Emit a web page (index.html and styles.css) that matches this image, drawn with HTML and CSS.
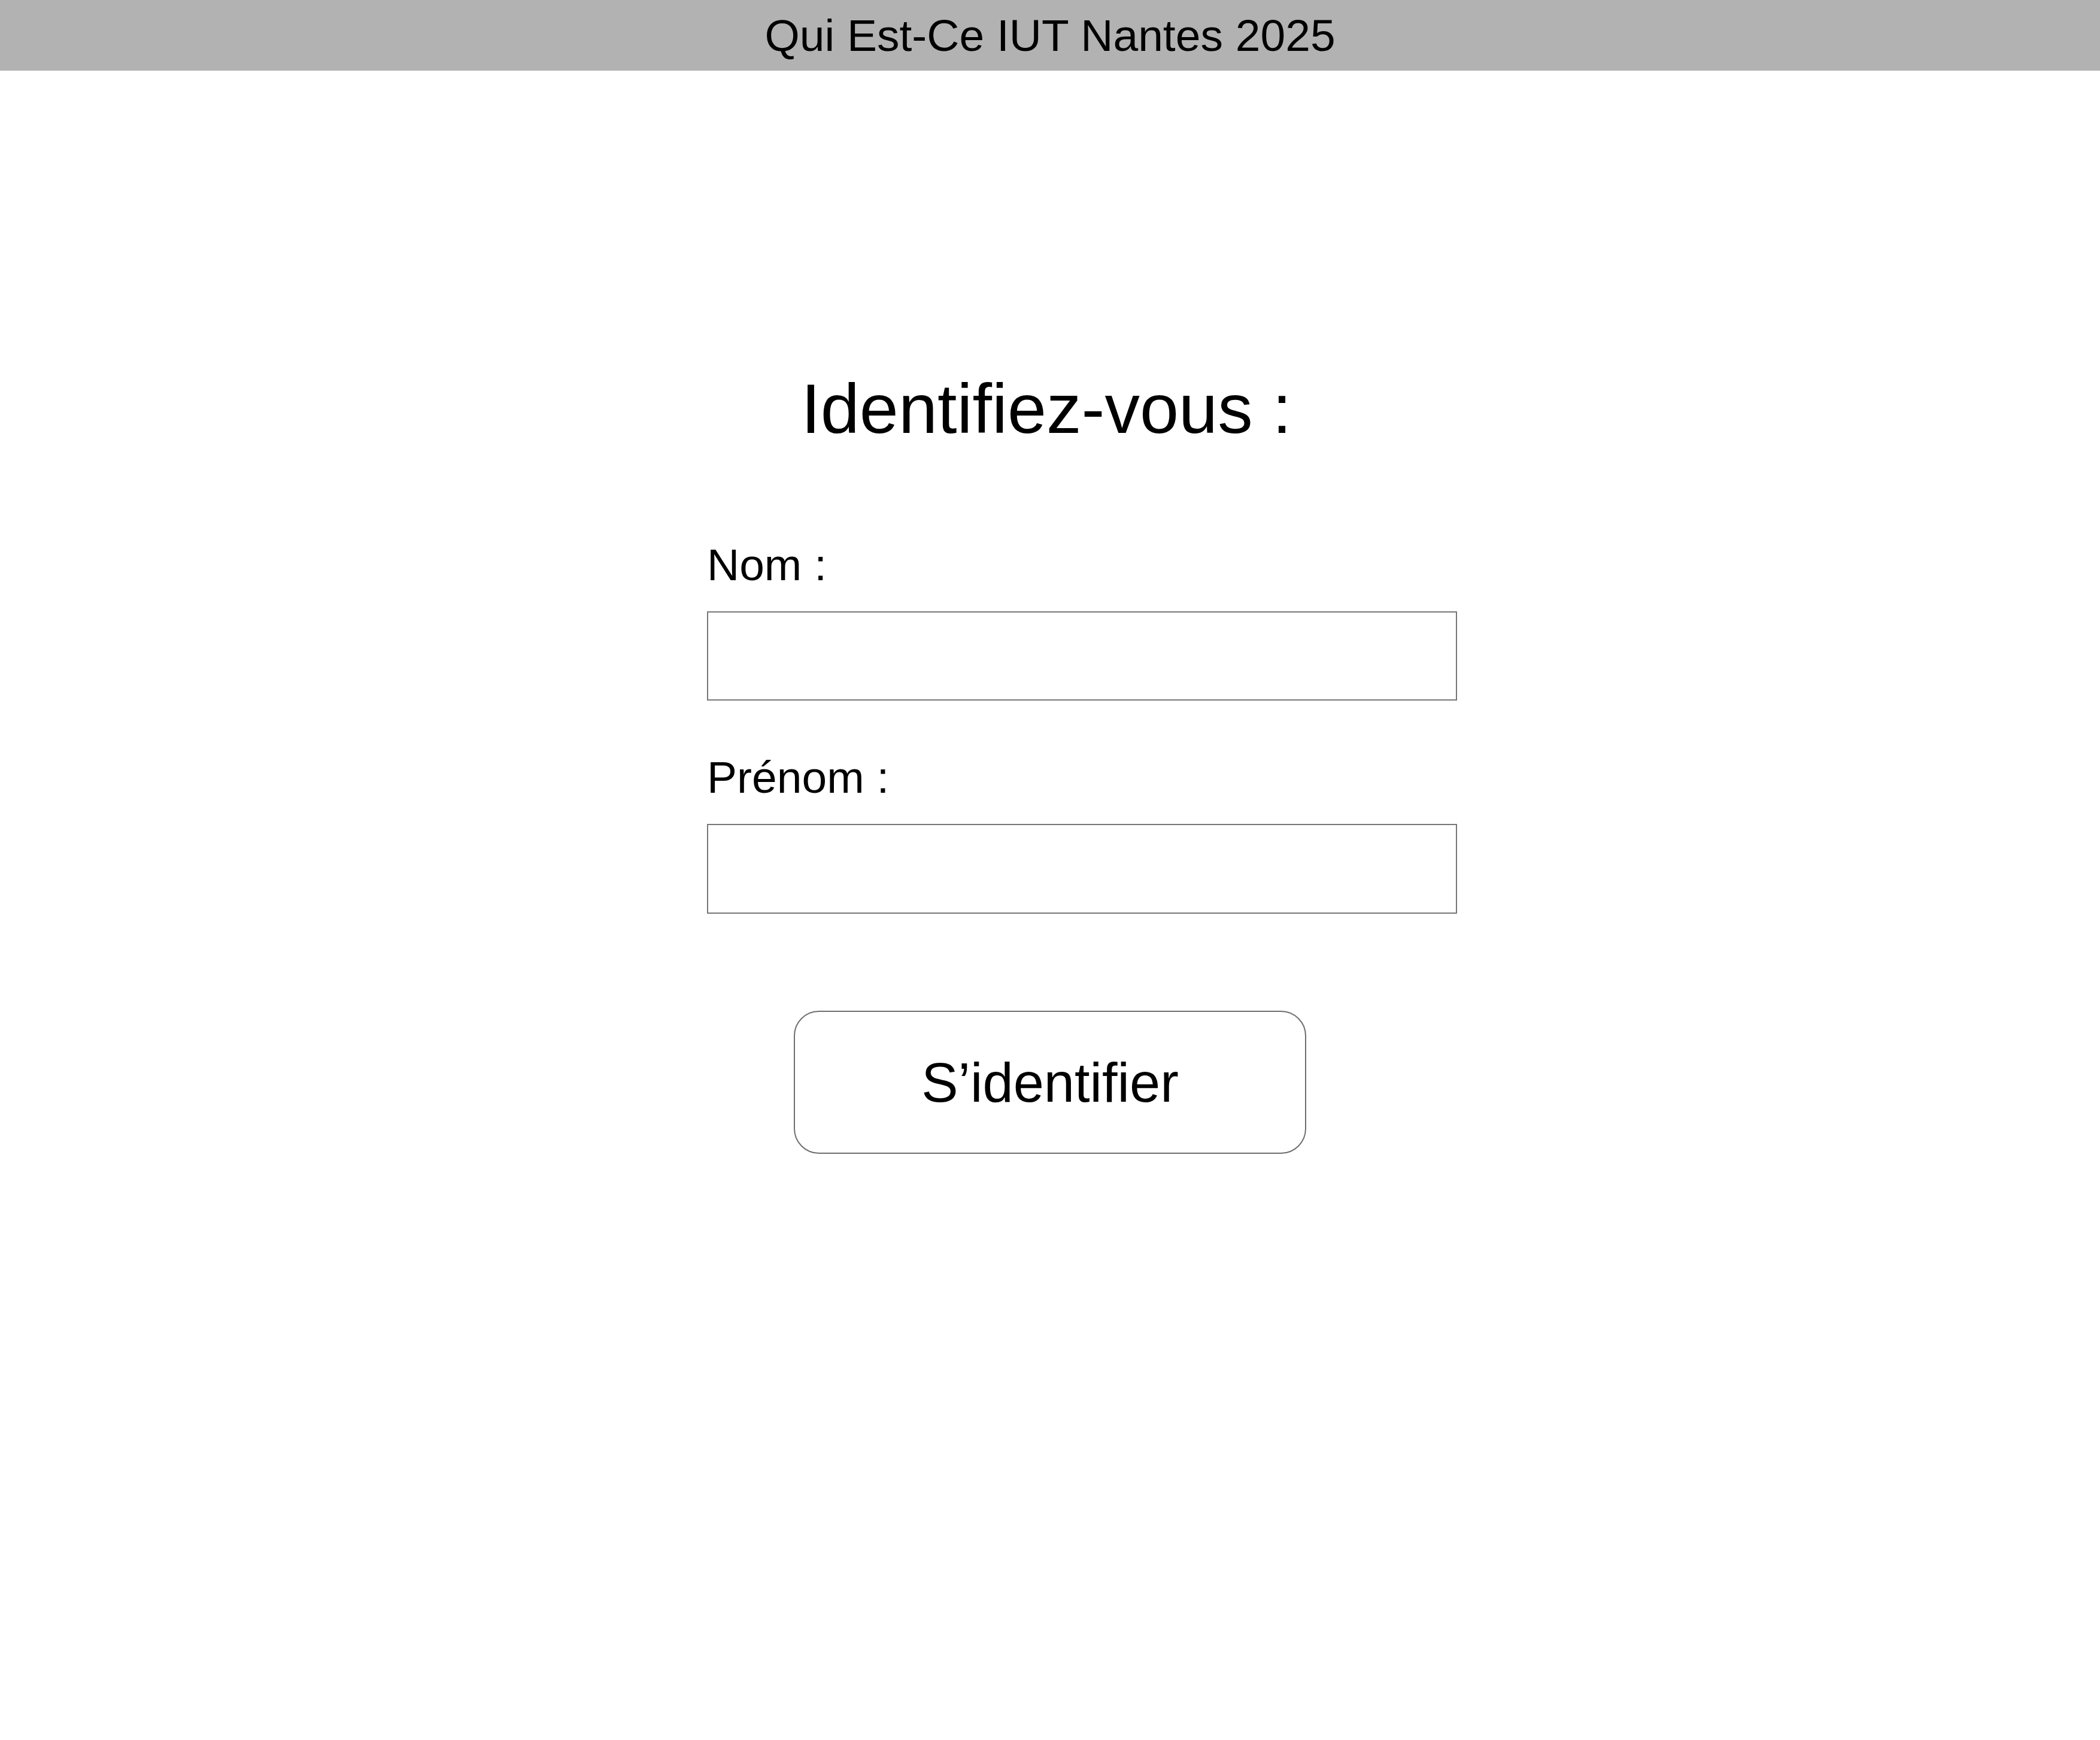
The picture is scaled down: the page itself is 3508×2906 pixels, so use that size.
FILE: index.html
```html
<!DOCTYPE html>
<html lang="fr">
<head>
<meta charset="utf-8">
<title>Qui Est-Ce IUT Nantes 2025</title>
<link rel="stylesheet" href="styles.css">
</head>
<body>
<header class="topbar">Qui Est-Ce IUT Nantes 2025</header>
<main class="login">
  <h1 class="login-title">Identifiez-vous :</h1>
  <form class="login-form" onsubmit="return false;">
    <div class="fields">
      <label class="field-label" for="nom">Nom :</label>
      <input class="field-input" id="nom" type="text">
      <label class="field-label field-label-next" for="prenom">Prénom :</label>
      <input class="field-input field-input-tall" id="prenom" type="text">
    </div>
    <button class="login-button" type="submit">S’identifier</button>
  </form>
</main>
</body>
</html>
```
FILE: styles.css
```css
html, body {
  margin: 0;
  padding: 0;
  background: #ffffff;
}

body {
  font-family: "Liberation Sans", Arial, sans-serif;
  color: #000000;
}

.topbar {
  height: 118px;
  line-height: 118px;
  background: #b2b2b2;
  text-align: center;
  font-size: 75px;
}

.login {
  display: flex;
  flex-direction: column;
  align-items: center;
}

.login-title {
  margin: 507px 0 0 0;
  padding-right: 12px;
  font-size: 117px;
  line-height: 116px;
  font-weight: normal;
  text-align: center;
}

.login-form {
  display: flex;
  flex-direction: column;
  align-items: center;
  margin-top: 165px;
}

.fields {
  display: flex;
  flex-direction: column;
  width: 1253px;
  margin-left: 107px;
}

.field-label {
  display: block;
  font-size: 75px;
  line-height: 74px;
}

.field-label-next {
  margin-top: 91px;
}

.field-input {
  box-sizing: border-box;
  width: 1253px;
  height: 149px;
  margin: 41px 0 0 0;
  padding: 0 20px;
  border: 2px solid #777777;
  border-radius: 0;
  background: #ffffff;
  font-family: inherit;
  font-size: 60px;
  outline: none;
}

.field-input-tall {
  height: 150px;
}

.login-button {
  box-sizing: border-box;
  width: 856px;
  height: 239px;
  margin-top: 162px;
  border: 2px solid #6e6e6e;
  border-radius: 42px;
  background: #ffffff;
  color: #000000;
  font-family: inherit;
  font-size: 92px;
  line-height: 1;
  padding: 0;
  cursor: pointer;
}
```
